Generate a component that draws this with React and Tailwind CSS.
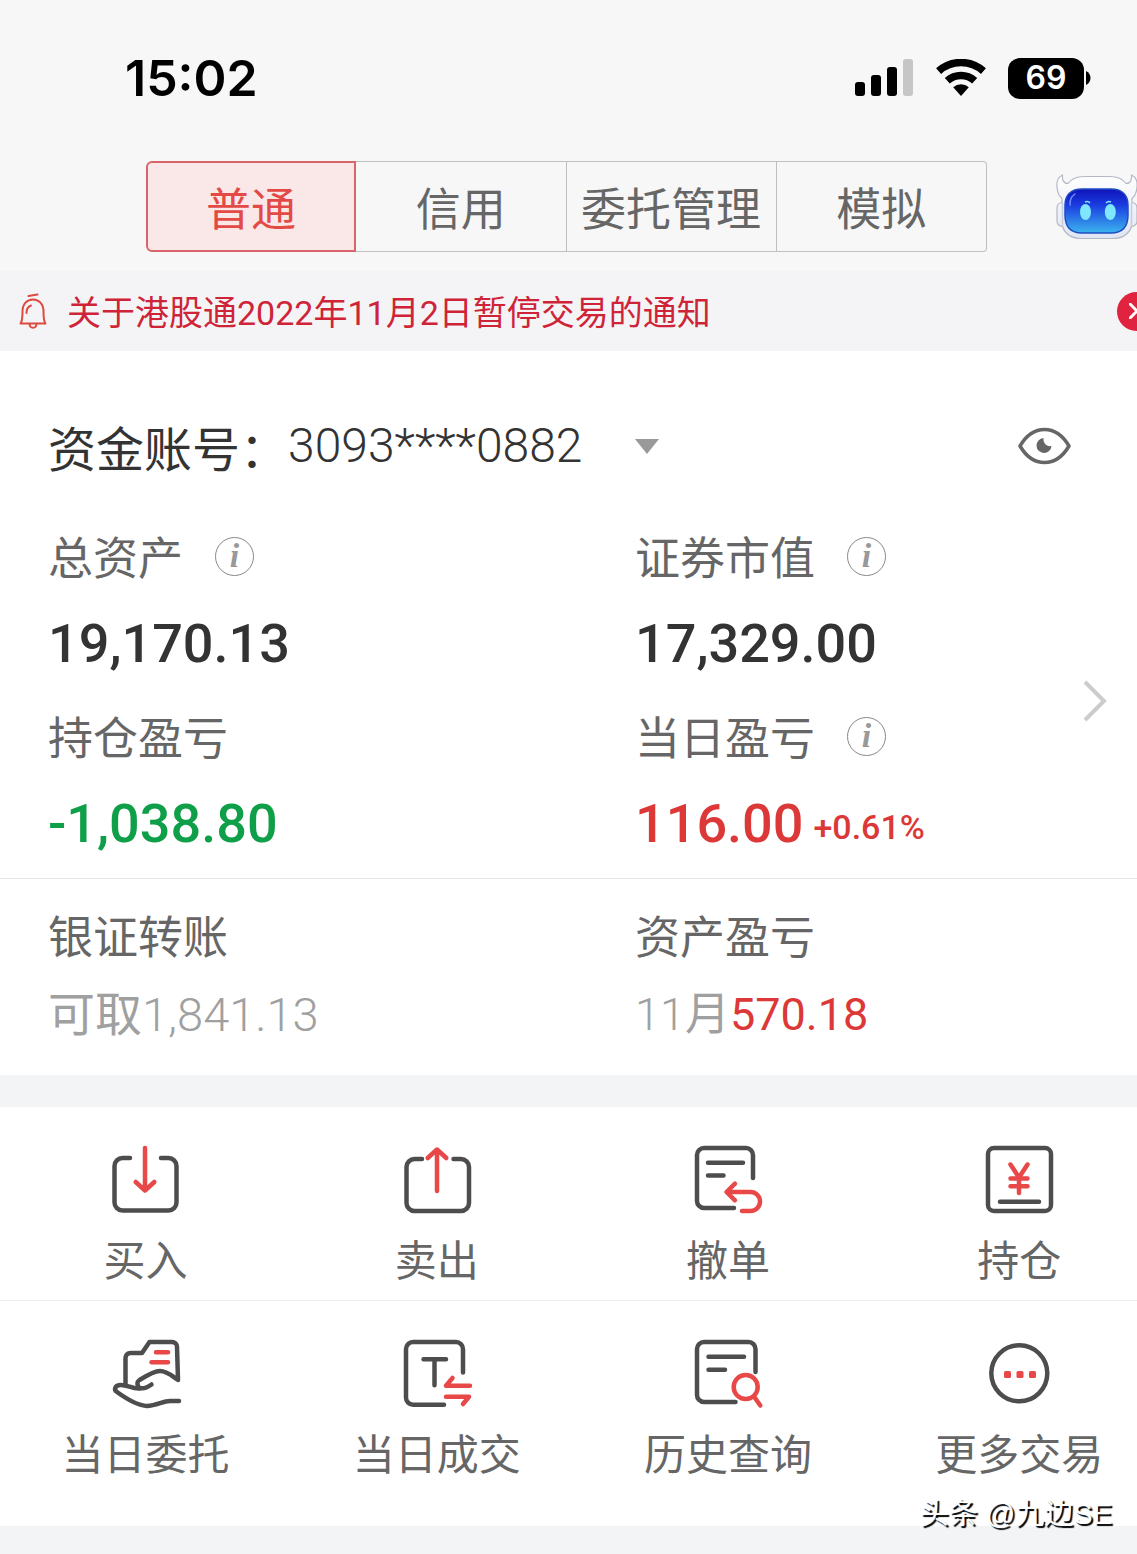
import React, { useState } from "react";

const tabs = ["普通", "信用", "委托管理", "模拟"];

const lineProps = {
  viewBox: "0 0 68 68",
  className: "w-[68px] h-[68px] overflow-visible",
  fill: "none",
  stroke: "#4d4d4d",
  strokeWidth: 4.5,
  strokeLinecap: "round",
  strokeLinejoin: "round",
  "aria-hidden": true,
};

const BuyIcon = () => (
  <svg {...lineProps}>
    <path d="M18 12h-7.500a8 8 0 0 0-8 8v36.500a8 8 0 0 0 8 8h46a8 8 0 0 0 8-8V20a8 8 0 0 0-8-8H49" />
    <path stroke="#e94848" d="M33 2v42.500M23.700 36l9.300 8.500 9.300-8.500" />
  </svg>
);

const SellIcon = () => (
  <svg {...lineProps}>
    <path d="M19 13h-7.500a8 8 0 0 0-8 8v36a8 8 0 0 0 8 8h46.500a8 8 0 0 0 8-8V21a8 8 0 0 0-8-8h-7.500" />
    <path stroke="#e94848" d="M34 45V3.500M24.700 12l9.300-8.500 9.300 8.500" />
  </svg>
);

const CancelIcon = () => (
  <svg {...lineProps}>
    <path d="M40 62H10a7 7 0 0 1-7-7V9a7 7 0 0 1 7-7h42a7 7 0 0 1 7 7v23M14 16.700h35M14 29.500h15.500" />
    <path stroke="#e94848" d="M41 37.700L32.500 46l8.500 8.300M33 46h23.500a9.500 9.500 0 0 1 0 19H48" />
  </svg>
);

const HoldIcon = () => (
  <svg {...lineProps}>
    <rect x="3" y="2" width="63" height="63" rx="6" />
    <path d="M15 55.700h39" />
    <path stroke="#e94848" d="M25.500 18.500l8.500 13 8.500-13M34 31.500V47M25.500 32.500h17M25.500 40.300h17" />
  </svg>
);

const EntrustIcon = () => (
  <svg {...lineProps}>
    <path d="M13.500 44V18a5 5 0 0 1 5-5H30l7.500-11H60a5 5 0 0 1 5 5l1 33C60 36 55 31 48 31c-6 0-14 5-20.500 9-3 2-2.500 5.500 0 8 3 .8 8-.5 12-3.500" />
    <path d="M27.500 48.500C20 49 15 44.500 8 45c-5 .5-6.500 4.500-3 7 9 6.500 20 13.500 30 14 10-.5 16-5 23-5h9" />
    <path stroke="#e94848" d="M44 12.300h12M39.500 22.300H56" />
  </svg>
);

const DealIcon = () => (
  <svg {...lineProps}>
    <path d="M41 64.700H10a7 7 0 0 1-7-7V9a7 7 0 0 1 7-7h43a7 7 0 0 1 7 7v23.500M20.500 19.300h22.500M31.500 19.300v26" />
    <path stroke="#e94848" d="M49.500 38l-6.500 7.700h24M43 56.700h23l-6 7.300" />
  </svg>
);

const HistoryIcon = () => (
  <svg {...lineProps}>
    <path d="M41.500 62H10a7 7 0 0 1-7-7V9a7 7 0 0 1 7-7h44.500a7 7 0 0 1 7 7v23M14.500 16.700H50M14.500 29.700H31" />
    <circle cx="51.700" cy="47" r="12" stroke="#e94848" />
    <path stroke="#e94848" d="M60.300 57l6 8.500" />
  </svg>
);

const MoreIcon = () => (
  <svg {...lineProps}>
    <circle cx="34.300" cy="33.300" r="28" />
    <g fill="#e94848" stroke="none">
      <rect x="19" y="31" width="7" height="7" rx="1.500" />
      <rect x="31.500" y="31" width="7" height="7" rx="1.500" />
      <rect x="44" y="31" width="7" height="7" rx="1.500" />
    </g>
  </svg>
);

const actions = [
  { label: "买入", Icon: BuyIcon },
  { label: "卖出", Icon: SellIcon },
  { label: "撤单", Icon: CancelIcon },
  { label: "持仓", Icon: HoldIcon },
  { label: "当日委托", Icon: EntrustIcon },
  { label: "当日成交", Icon: DealIcon },
  { label: "历史查询", Icon: HistoryIcon },
  { label: "更多交易", Icon: MoreIcon },
];

function StatusBar() {
  return (
    <div className="flex items-center justify-between h-[156px] pl-[125px] pr-[46px]">
      <span className="font-['Inter',sans-serif] font-semibold text-[50px] leading-[60px] text-black">15:02</span>
      <div className="flex items-center">
        <svg viewBox="0 0 58 38" className="w-[58px] h-[38px]" aria-hidden="true">
          <rect x="0" y="23" width="10" height="14" rx="3" />
          <rect x="16" y="16" width="10" height="21" rx="3" />
          <rect x="32" y="8" width="10" height="29" rx="3" />
          <rect x="48" y="0" width="10" height="37" rx="3" fill="#c6c6c6" />
        </svg>
        <svg viewBox="0 0 52 38" className="w-[52px] h-[38px] ml-[22px]" fill="none" stroke="#000" aria-hidden="true">
          <path d="M3.600 12.100A33.500 33.500 0 0 1 48.400 12.100" strokeWidth="7.500" />
          <path d="M12.300 21.800A20.500 20.500 0 0 1 39.700 21.800" strokeWidth="7.500" />
          <path d="M26 37L18.200 28.300A11.700 11.700 0 0 1 33.800 28.300z" fill="#000" stroke="none" />
        </svg>
        <span className="flex items-center justify-center w-[76px] h-[41px] ml-[21px] rounded-xl bg-black text-white font-['Inter',sans-serif] font-semibold text-[32px] leading-10">
          69
        </span>
        <svg viewBox="0 0 5 14" className="w-[5px] h-[14px] ml-[2px]" aria-hidden="true">
          <path d="M0 0c6 3 6 11 0 14z" />
        </svg>
      </div>
    </div>
  );
}

function RobotIcon() {
  return (
    <svg viewBox="0 0 82 66" className="w-[82px] h-[66px]" aria-hidden="true">
      <defs>
        <linearGradient id="screen" x1="0" y1="0" x2="0" y2="1">
          <stop offset="0" stopColor="#1013b8" />
          <stop offset="0.350" stopColor="#1a3ae0" />
          <stop offset="1" stopColor="#3bb4ee" />
        </linearGradient>
        <linearGradient id="shell" x1="0" y1="0" x2="0" y2="1">
          <stop offset="0" stopColor="#ffffff" />
          <stop offset="1" stopColor="#dfe6f3" />
        </linearGradient>
      </defs>
      <path
        d="M6.500 1C2 3 .5 8 1 13c.3 5 2 9 5 11.500v4C3 29 1 31 1 34v13c0 3 2 5 5.500 5.500C9 60 16 64.500 26 64.500h30c10 0 17-4.500 19.500-12 3.500-.5 5.500-2.500 5.500-5.500V34c0-3-2-5-5-5.500v-4c3-2.500 4.700-6.500 5-11.500.5-5-1-10-5.500-12 .5 5-1 8.500-5.500 8.500C66 4 61 2.500 54 2.500H28C21 2.500 16 4 12 9.500 7.500 9.500 6 6 6.500 1z"
        fill="url(#shell)"
        stroke="#b4b8c4"
        strokeWidth="1.200"
      />
      <path d="M6.500 29v23M75.500 29v23" stroke="#c6ccdb" strokeWidth="1.500" />
      <path
        d="M26 15h29c11 0 17 6 17 16v10c0 12-6 18-17 18H26C15 59 9 53 9 41V31c0-10 6-16 17-16z"
        fill="url(#screen)"
        stroke="#1f4cc4"
        strokeWidth="1.500"
      />
      <path d="M14 31c0-7 2-9 5-11" fill="none" stroke="#6f8cff" strokeWidth="1.500" strokeLinecap="round" />
      <ellipse cx="29.500" cy="38" rx="5.500" ry="8" fill="#7fe6fb" />
      <ellipse cx="54.300" cy="38" rx="5.500" ry="8" fill="#7fe6fb" />
      <path d="M29 28q3-1.500 5 1M50 29q2-2.500 5-1" fill="none" stroke="#7fe6fb" strokeWidth="1.500" />
    </svg>
  );
}

function Notice() {
  return (
    <div className="flex items-center h-20 pl-[19px] bg-[#f4f4f7] text-[#cf2438] overflow-hidden">
      <svg viewBox="0 0 28 36" className="w-7 h-9 shrink-0" fill="none" stroke="#dc4a40" strokeWidth="2" strokeLinecap="round" strokeLinejoin="round" aria-hidden="true">
        <path d="M9.500 3l9-1.500" />
        <path d="M1.500 30.500c2-2.500 2-6 2-12C3.500 11 8 6.500 14 6.500S24.500 11 24.500 18.500c0 6 0 9.500 2 12z" />
        <path d="M7.500 20c0-4 1.500-6.500 4.500-7.500M10.500 31c.5 5 6.500 5 7 0" />
      </svg>
      <a href="#notice" className="ml-5 pt-1 flex-1 whitespace-nowrap text-[34px] leading-[48px]">
        关于港股通2022年11月2日暂停交易的通知
      </a>
      <button aria-label="关闭" className="shrink-0 -mr-[19px] w-[39px] h-[39px] rounded-full bg-[#e02440] flex items-center justify-center">
        <svg viewBox="0 0 16 16" className="w-4 h-4" stroke="#fff" strokeWidth="3" strokeLinecap="round" aria-hidden="true">
          <path d="M1 1l14 14M15 1L1 15" />
        </svg>
      </button>
    </div>
  );
}

function Asset({ label, value, color, info, extra }) {
  return (
    <div className="whitespace-nowrap">
      <div className="flex items-center h-20 pb-1 text-[45px] text-[#666] font-['Noto_Sans_CJK_SC',sans-serif]">
        {label}
        {info && (
          <button
            aria-label={`${label}说明`}
            className="ml-8 w-[39px] h-[39px] rounded-full border border-[#888] text-[#999] flex items-center justify-center font-['Liberation_Serif',serif] font-bold italic text-[34px] leading-8"
          >
            i
          </button>
        )}
      </div>
      <div className={`flex items-center h-[90px] text-[54px] font-medium ${color}`}>
        {value}
        {extra && <span className="ml-[10px] pt-2 text-[34px]">{extra}</span>}
      </div>
    </div>
  );
}

function Account() {
  const [hidden, setHidden] = useState(false);
  const mask = (v) => (hidden ? "****" : v);

  return (
    <section className="bg-white pt-[59px]">
      <div className="flex items-center h-[72px] pl-12 pr-[66px] text-[48px] text-[#333] whitespace-nowrap">
        <span className="font-['Noto_Sans_CJK_SC',sans-serif]">资金账号：</span>
        <button className="flex items-center font-light" aria-label="切换账号">
          3093****0882
          <svg viewBox="0 0 24 15" className="w-6 h-[15px] ml-[53px]" fill="#999" aria-hidden="true">
            <path d="M0 0h24L12 15z" />
          </svg>
        </button>
        <button className="ml-auto" aria-label="显示或隐藏金额" onClick={() => setHidden(!hidden)}>
          <svg viewBox="0 0 53 38" className="w-[53px] h-[38px]" aria-hidden="true">
            <path d="M2 19C15-3 38-3 51 19 38 41 15 41 2 19z" fill="none" stroke="#666" strokeWidth="3.500" strokeLinejoin="round" />
            <path d="M25.500 11a7.500 7.500 0 1 0 8 8c-5 1-8.500-3-8-8z" fill="#666" />
          </svg>
        </button>
      </div>

      {/* Balances */}
      <div className="flex items-center pl-12 pr-[30px] pt-9 pb-[10px] border-b border-[#e8e8e8]">
        <div className="flex-1 grid grid-cols-[587fr_448fr] gap-y-[10px]">
          <Asset label="总资产" value={mask("19,170.13")} color="text-[#333]" info />
          <Asset label="证券市值" value={mask("17,329.00")} color="text-[#333]" info />
          <Asset label="持仓盈亏" value={mask("-1,038.80")} color="text-[#0f9f48]" />
          <Asset label="当日盈亏" value={mask("116.00")} color="text-[#dc3838]" info extra="+0.61%" />
        </div>
        <a href="#detail" aria-label="资产详情" className="pt-4">
          <svg viewBox="0 0 24 42" className="w-6 h-[42px]" fill="none" stroke="#ccc" strokeWidth="4" aria-hidden="true">
            <path d="M2 2l19 19L2 40" />
          </svg>
        </a>
      </div>

      {/* Transfer and monthly result */}
      <div className="grid grid-cols-[587fr_448fr] pl-12 pr-[54px] pt-4 pb-5 leading-[80px] text-[45px] whitespace-nowrap">
        <a href="#transfer" className="block">
          <div className="text-[#666] font-['Noto_Sans_CJK_SC',sans-serif]">银证转账</div>
          <div className="text-[#a0a0a0] text-[47px]">
            可取<span className="font-light">{mask("1,841.13")}</span>
          </div>
        </a>
        <a href="#profit" className="block">
          <div className="text-[#666] font-['Noto_Sans_CJK_SC',sans-serif]">资产盈亏</div>
          <div className="text-[#a0a0a0]">
            <span className="font-light">11</span>月<span className="text-[#dc3838]">{mask("570.18")}</span>
          </div>
        </a>
      </div>
    </section>
  );
}

function App() {
  const [active, setActive] = useState(0);

  return (
    <div className="relative w-full overflow-hidden bg-[#f2f4f6] font-['Roboto','Noto_Sans_CJK_SC',sans-serif]">
      <header className="bg-[#f7f7f7] pb-[19px]">
        <StatusBar />
        <div className="flex items-center pt-[5px] pl-[146px]">
          <nav className="flex-1 grid grid-cols-4">
            {tabs.map((tab, i) => (
              <button
                key={tab}
                onClick={() => setActive(i)}
                className={`h-[91px] text-[45px] whitespace-nowrap font-['Noto_Sans_CJK_SC',sans-serif] first:rounded-l-md last:rounded-r-sm ${
                  active === i
                    ? "bg-[#fae7e7] border-2 border-[#d9646a] text-[#e34a45]"
                    : "border-y border-r first:border-l border-[#bfbfbf] text-[#666]"
                }`}
              >
                {tab}
              </button>
            ))}
          </nav>
          <button className="ml-[69px] -mr-px shrink-0" aria-label="智能助手">
            <RobotIcon />
          </button>
        </div>
      </header>

      <Notice />
      <Account />

      <section className="mt-8 bg-white pb-8">
        <div className="-mr-7 grid grid-cols-4">
          {actions.map(({ label, Icon }, i) => (
            <button
              key={label}
              className={`flex flex-col items-center pt-[39px] pb-3 text-[42px] leading-[60px] text-[#666] font-['Noto_Sans_CJK_SC',sans-serif] ${
                i < 4 ? "border-b border-[#eee]" : ""
              }`}
            >
              <Icon />
              <span className="mt-[14px]">{label}</span>
            </button>
          ))}
        </div>
      </section>

      <div className="h-7" />
      <div className="absolute right-[25px] bottom-5 text-[29px] leading-10 text-white font-['Liberation_Sans','Noto_Sans_CJK_SC',sans-serif] [text-shadow:2px_2px_1px_#000]">
        头条 @九边SE
      </div>
    </div>
  );
}

export default App;
